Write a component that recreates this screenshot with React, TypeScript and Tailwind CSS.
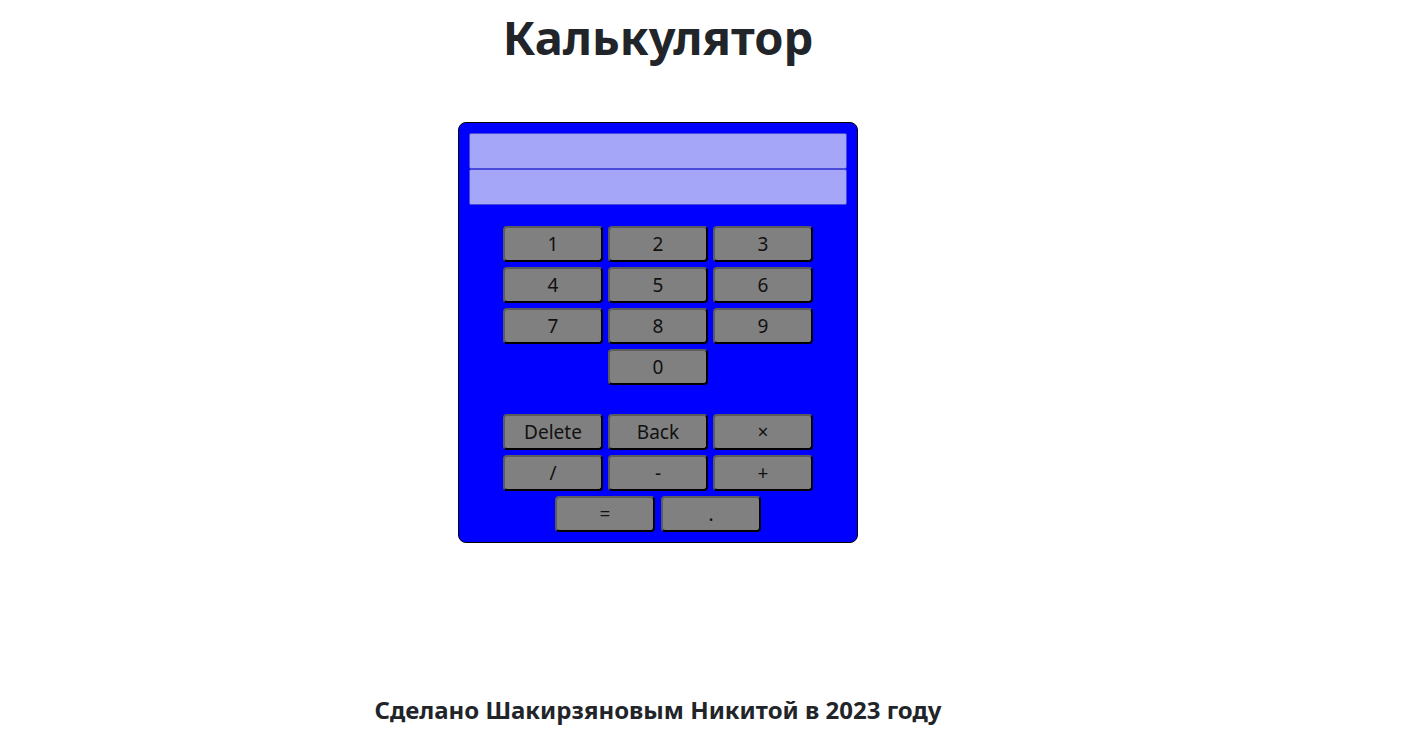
import { useState } from 'react';

const digits = ['1', '2', '3', '4', '5', '6', '7', '8', '9'];

function Key({ label, onClick }: { label: string; onClick: () => void }) {
  return (
    <button
      onClick={onClick}
      className="w-[100px] h-[36px] bg-[#808080] text-[19px] text-[#111] rounded-[4px] border-2 border-t-[#5c5c5c] border-l-[#5c5c5c] border-b-black border-r-black leading-none"
    >
      {label}
    </button>
  );
}

function App() {
  const [expr, setExpr] = useState('');
  const [result, setResult] = useState('');

  const press = (v: string) => setExpr((e) => e + v);

  const calc = () => {
    try {
      // eslint-disable-next-line no-new-func
      const r = Function('return (' + expr.replace(/×/g, '*') + ')')();
      setResult(String(r));
    } catch {
      setResult('Ошибка');
    }
  };

  return (
    <div
      className="w-[1316px] min-h-[753px] flex flex-col items-center text-[#212529]"
      style={{ fontFamily: '"Noto Sans", "Open Sans", sans-serif' }}
    >
      <h1 className="mt-[9px] text-[47px] font-bold leading-[1.2]">Калькулятор</h1>

      <div className="mt-[57px] w-[400px] bg-[#0000ff] border border-black rounded-[8px] p-[10px] flex flex-col items-center">
        <input
          readOnly
          value={expr}
          className="w-full h-[36px] bg-[#a6a6f8] border border-[#4a4ad8] rounded-[2px] px-2 text-[18px] outline-none"
        />
        <input
          readOnly
          value={result}
          className="w-full h-[36px] bg-[#a6a6f8] border border-[#4a4ad8] rounded-[2px] px-2 text-[18px] outline-none"
        />

        <div className="mt-[21px] grid grid-cols-3 gap-[5px]">
          {digits.map((d) => (
            <Key key={d} label={d} onClick={() => press(d)} />
          ))}
          <div />
          <Key label="0" onClick={() => press('0')} />
        </div>

        <div className="mt-[29px] grid grid-cols-3 gap-[5px]">
          <Key label="Delete" onClick={() => { setExpr(''); setResult(''); }} />
          <Key label="Back" onClick={() => setExpr((e) => e.slice(0, -1))} />
          <Key label="×" onClick={() => press('×')} />
          <Key label="/" onClick={() => press('/')} />
          <Key label="-" onClick={() => press('-')} />
          <Key label="+" onClick={() => press('+')} />
        </div>
        <div className="mt-[5px] flex gap-[6px]">
          <Key label="=" onClick={calc} />
          <Key label="." onClick={() => press('.')} />
        </div>
      </div>

      <h4 className="mt-auto mb-[28px] text-[24px] font-bold leading-[1.2]">
        Сделано Шакирзяновым Никитой в 2023 году
      </h4>
    </div>
  );
}

export default App;
